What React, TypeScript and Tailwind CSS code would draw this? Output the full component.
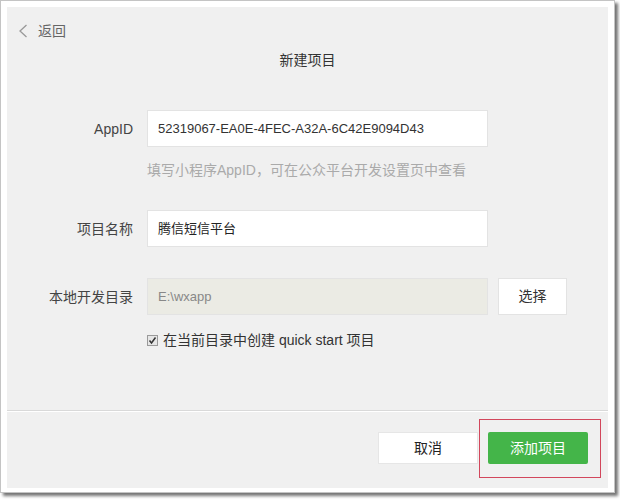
const FONT = { fontFamily: '"Liberation Sans", "Noto Sans CJK SC", sans-serif' };

const LABEL = 'w-[126px] shrink-0 text-right text-[14px] leading-[20px] text-[#444]';
const INPUT_BOX =
  'flex h-[37px] w-[341px] items-center border border-[#e3e3e3] px-[10px] text-[13px] leading-[18px]';

function Row({ label, children }: { label: string; children: React.ReactNode }) {
  return (
    <div className="flex items-center gap-[14px]">
      <span className={LABEL}>{label}</span>
      {children}
    </div>
  );
}

export default function App() {
  return (
    <div className="h-[500px] w-[620px] bg-white" style={FONT}>
      <div className="flex h-[493px] w-[615px] flex-col border border-[#c4c4c4] bg-white pb-[4px] pl-[6px] pr-[6px] pt-[6px] shadow-[3px_3px_3px_rgba(0,0,0,0.55)]">
        <div className="relative flex flex-1 flex-col bg-[#f0f0f0]">
          <div className="flex flex-1 flex-col">
            {/* back */}
            <div className="ml-[11px] mt-[15px] flex h-[18px] items-center gap-[10px] text-[14px] text-[#666]">
              <svg width="10" height="14" viewBox="0 0 10 14" fill="none">
                <polyline points="8.5,1 2,7 8.5,13" stroke="#999" strokeWidth="1.3" />
              </svg>
              <span className="leading-[18px]">返回</span>
            </div>

            <h1 className="mt-[10px] text-center text-[14px] leading-[20px] text-[#333]">新建项目</h1>

            <div className="mt-[40px]">
              <Row label="AppID">
                <div className={`${INPUT_BOX} bg-white text-[#333]`}>
                  52319067-EA0E-4FEC-A32A-6C42E9094D43
                </div>
              </Row>
              <p className="ml-[140px] mt-[13px] text-[14px] leading-[20px] text-[#aaa]">
                填写小程序AppID，可在公众平台开发设置页中查看
              </p>
            </div>

            <div className="mt-[30px]">
              <Row label="项目名称">
                <div className={`${INPUT_BOX} bg-white text-[#222]`}>腾信短信平台</div>
              </Row>
            </div>

            <div className="mt-[31px]">
              <Row label="本地开发目录">
                <div className={`${INPUT_BOX} bg-[#ebebe4] text-[#888]`}>E:\wxapp</div>
                <button
                  type="button"
                  className="-ml-[4px] h-[37px] w-[69px] border border-[#e3e3e3] bg-white text-[14px] text-[#333]"
                >
                  选择
                </button>
              </Row>
            </div>

            <label className="ml-[140px] mt-[15px] flex items-center gap-[5px] text-[14px] leading-[20px] text-[#333]">
              <span className="flex h-[11px] w-[11px] items-center justify-center border border-[#9a9a9a] bg-[#e6e6e6]">
                <svg width="9" height="9" viewBox="0 0 9 9" fill="none">
                  <polyline points="1.5,4.5 3.5,7 7.5,1.5" stroke="#333" strokeWidth="1.5" />
                </svg>
              </span>
              在当前目录中创建 quick start 项目
            </label>
          </div>

          <div className="h-px bg-[#d9d9d9]" />
          <div className="h-px bg-white" />

          <div className="relative flex h-[76px] justify-end gap-[10px] pr-[20px] pt-[20px]">
            <button
              type="button"
              className="h-[32px] w-[100px] border border-[#e6e6e6] bg-white text-[14px] text-[#222]"
            >
              取消
            </button>
            <button
              type="button"
              className="h-[32px] w-[100px] rounded-[2px] bg-[#44b549] text-[14px] text-white"
            >
              添加项目
            </button>
            <div className="pointer-events-none absolute left-[472px] top-[7px] h-[59px] w-[122px] border border-[#d2475c]" />
          </div>
        </div>
      </div>
    </div>
  );
}
